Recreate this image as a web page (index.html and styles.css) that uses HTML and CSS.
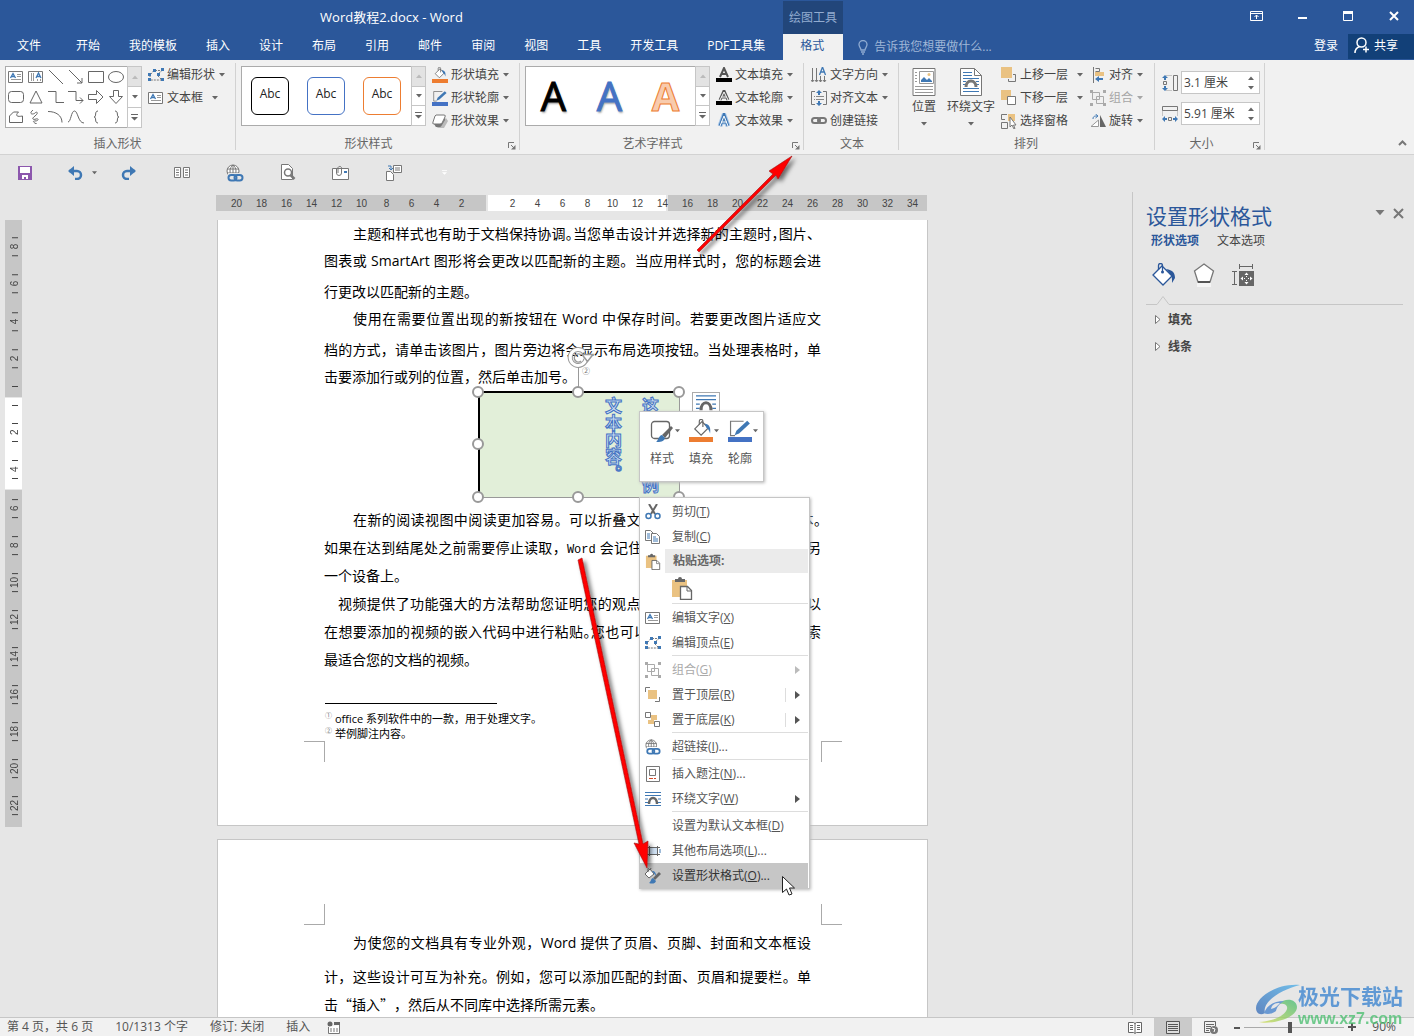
FILE: index.html
```html
<!DOCTYPE html>
<html lang="zh-CN">
<head>
<meta charset="utf-8">
<title>Word教程2.docx - Word</title>
<link rel="stylesheet" href="styles.css">
</head>
<body>
<svg class="defs" aria-hidden="true">
  <defs>
    <symbol id="caret" viewBox="0 0 6 4"><path d="M0 0h6L3 3.500z" fill="currentColor"/></symbol>
    <symbol id="launcher" viewBox="0 0 8 8"><path d="M.5 6V.5H6M3 3l3 3" fill="none" stroke="#777"/><path d="M7.500 3v4.500H3z" fill="#777"/></symbol>
    <symbol id="more" viewBox="0 0 7 7"><path d="M0 0h7v1H0zM0 3h7L3.500 6.500z" fill="currentColor"/></symbol>
    <symbol id="textbox" viewBox="0 0 16 14"><path d="M.5 1.500h14v11H.5z" fill="#fff" stroke="#777"/><path d="M9 4.500h4M9 6.500h4M3 9.500h10" stroke="#999"/><path d="M2.500 8L5 3.500 7.500 8M3.500 6.500h3" fill="none" stroke="#3f78b4" stroke-width="1.300"/></symbol>
    <symbol id="points" viewBox="0 0 16 14"><path d="M2 12V7l4-4.500h8L9 7l5 5H2" fill="none" stroke="#777" stroke-dasharray="2 1"/><path d="M0 10h3v3H0zM0 5h3v3H0zM5 1h3v3H5zM13 0h3v3h-3zM9 5h3v3H9zM13 10h3v3h-3z" fill="#3f78b4"/></symbol>
    <symbol id="group" viewBox="0 0 16 16"><path d="M2.500 2.500h7v7h-7zM6.500 6.500h7v7h-7z" fill="none" stroke="#aaa"/><path d="M0 0h3v3H0zM13 0h3v3h-3zM0 13h3v3H0zM13 13h3v3h-3z" fill="#aaa"/></symbol>
    <symbol id="bucket" viewBox="0 0 24 20"><path d="M4 11l8-8 7 7-8 8z" fill="#fff" stroke="#666" stroke-width="1.300"/><path d="M9 6V2.500a2 2 0 0 1 4 0V9" fill="none" stroke="#666" stroke-width="1.300"/><path d="M15 5c5 1 7 4 6 11-1-3-2-5-4-6z" fill="#3f78b4"/></symbol>
    <symbol id="pen" viewBox="0 0 24 20"><path d="M16 2.500H1.500v16h5" fill="none" stroke="#777" stroke-width="1.300"/><path d="M6 18l2-5L20 2l3 3L11 16z" fill="#3f78b4"/></symbol>
    <symbol id="wrap" viewBox="0 0 16 14"><path d="M0 .5h16M0 3.500h16M0 10.500h3M13 10.500h3M0 13.500h16M0 7h3M13 7h3" stroke="#3f78b4"/><path d="M4 12c0-8 8-8 8 0" fill="none" stroke="#666" stroke-width="2.500"/></symbol>
    <symbol id="weblink" viewBox="0 0 18 18"><circle cx="7" cy="7" r="6" fill="#fff" stroke="#777"/><path d="M1 5h12M1 9h12M7 1v12M7 1C3 4 3 10 7 13M7 1c4 3 4 9 0 12" fill="none" stroke="#777"/><path d="M2 9h16v9H2z" fill="#e6e6e6"/><rect x="2.500" y="11" width="8" height="5.500" rx="2.700" fill="none" stroke="#3f78b4" stroke-width="2"/><rect x="8.500" y="11" width="8" height="5.500" rx="2.700" fill="none" stroke="#3f78b4" stroke-width="2"/></symbol>
    <symbol id="weblink-menu" viewBox="0 0 18 18"><circle cx="7" cy="7" r="6" fill="#fff" stroke="#777"/><path d="M1 5h12M1 9h12M7 1v12M7 1C3 4 3 10 7 13M7 1c4 3 4 9 0 12" fill="none" stroke="#777"/><path d="M2 9h16v9H2z" fill="#fff"/><rect x="2.500" y="11" width="8" height="5.500" rx="2.700" fill="none" stroke="#3f78b4" stroke-width="2"/><rect x="8.500" y="11" width="8" height="5.500" rx="2.700" fill="none" stroke="#3f78b4" stroke-width="2"/></symbol>
    <symbol id="paste" viewBox="0 0 22 24"><path d="M1 4h15v17H1z" fill="#eac282"/><path d="M4 6V3h3a2 2 0 0 1 4 0h3v3z" fill="#666"/><path d="M9.500 10.500h7l4 4v9h-11z" fill="#fff" stroke="#666" stroke-width="1.300"/><path d="M16 11v4h4" fill="none" stroke="#666"/></symbol>
    <symbol id="arrow-right" viewBox="0 0 5 8"><path d="M0 0l5 4-5 4z" fill="currentColor"/></symbol>
  </defs>
</svg>

<header class="titlebar">
  <h1 class="doc-title">Word教程2.docx - Word</h1>
  <span class="context-title">绘图工具</span>
  <div class="window-buttons">
    <button aria-label="功能区显示选项"><svg width="13" height="10"><path d="M.5.500h12v9H.5zM.5 2.500h12M6.500 8V4M4.500 6l2-2 2 2" fill="none" stroke="#fff"/></svg></button>
    <button aria-label="最小化"><svg width="9" height="6"><path d="M0 4h9v2H0z" fill="#fff"/></svg></button>
    <button aria-label="最大化"><svg width="10" height="10"><path d="M.5.500h9v9h-9zM0 1.500h10" fill="none" stroke="#fff"/><path d="M0 0h10v3H0z" fill="#fff"/></svg></button>
    <button aria-label="关闭"><svg width="10" height="10"><path d="M1 1l8 8M9 1L1 9" stroke="#fff" stroke-width="2"/></svg></button>
  </div>
</header>

<nav class="tabs">
  <button class="tab file">文件</button><button class="tab">开始</button><button class="tab">我的模板</button><button class="tab">插入</button><button class="tab">设计</button><button class="tab">布局</button><button class="tab">引用</button><button class="tab">邮件</button><button class="tab">审阅</button><button class="tab">视图</button><button class="tab">工具</button><button class="tab">开发工具</button><button class="tab">PDF工具集</button><button class="tab active">格式</button>
  <button class="tell-me"><svg width="10" height="15"><path d="M3 10C3 8 1 7 1 4.500a4 4 0 0 1 8 0C9 7 7 8 7 10zM3 12h4M4 14h2" fill="none" stroke="#8fabd1" stroke-width="1.300"/></svg>告诉我您想要做什么...</button>
  <button class="sign-in">登录</button>
  <button class="share"><svg width="16" height="17"><circle cx="7.500" cy="5.500" r="4.500" fill="none" stroke="#fff" stroke-width="1.500"/><path d="M1 16c0-4 2-5.500 4.500-6.500M9 12.500h6M12 9.500v6" fill="none" stroke="#fff" stroke-width="1.500"/></svg>共享</button>
</nav>

<section class="ribbon" aria-label="格式">
  <div class="group g-insert">
    <div class="group-body">
      <div class="gallery shapes">
        <div class="shape-grid">
          <svg viewBox="0 0 16 14"><use href="#textbox"/></svg>
          <svg viewBox="0 0 16 14"><path d="M.5 1.500h14v11H.5z" fill="#fff" stroke="#777"/><path d="M3.500 3v8M5.500 3v8M9.500 9v2M12.500 9v2" stroke="#999"/><path d="M8 8l2.500-5L13 8M9 6.500h3" fill="none" stroke="#3f78b4" stroke-width="1.300"/></svg>
          <svg viewBox="0 0 16 14"><path d="M1 0l14 14"/></svg>
          <svg viewBox="0 0 16 14"><path d="M1 0l13 13M14 8v5H9"/></svg>
          <svg viewBox="0 0 16 14"><path d="M.5 1.500h15v11H.5z"/></svg>
          <svg viewBox="0 0 16 14"><ellipse cx="8" cy="7" rx="7.500" ry="5.500"/></svg>
          <svg viewBox="0 0 16 14"><rect x=".5" y="1.500" width="15" height="11" rx="3"/></svg>
          <svg viewBox="0 0 16 14"><path d="M8 1l6 12H2z"/></svg>
          <svg viewBox="0 0 16 14"><path d="M0 1.500h8v11h8"/></svg>
          <svg viewBox="0 0 16 14"><path d="M0 1.500h8v9h7M12 7.500l3 3-3 3"/></svg>
          <svg viewBox="0 0 16 14"><path d="M.5 4.500h8V.5L15 7l-6.500 6.500v-4h-8z"/></svg>
          <svg viewBox="0 0 16 14"><path d="M5.500.5h5v6h4L8 13.500 1.500 6.500h4z"/></svg>
          <svg viewBox="0 0 16 14"><path d="M1.500 12.500V6l4-4h5c-4 4-1 5 4 4v6.500z"/></svg>
          <svg viewBox="0 0 16 14"><path d="M5 0c-5 4 0 5 2 3s4 0 0 3-2 4 1 3 3 2-1 2 1 3 2 3"/></svg>
          <svg viewBox="0 0 16 14"><path d="M0 1.500c8 0 14 4 14 11"/></svg>
          <svg viewBox="0 0 16 14"><path d="M0 12C3 12 3 1 6.500 1S10 13 16 13"/></svg>
          <svg viewBox="0 0 16 14"><path d="M10 1C6 1 9 7 6 7c3 0 0 6 4 6"/></svg>
          <svg viewBox="0 0 16 14"><path d="M7 1c4 0 1 6 4 6-3 0 0 6-4 6"/></svg>
        </div>
        <div class="scroller"><button disabled aria-label="上一行"><svg class="flip" width="6" height="4"><use href="#caret"/></svg></button><button aria-label="下一行"><svg width="6" height="4"><use href="#caret"/></svg></button><button aria-label="其他"><svg width="7" height="7"><use href="#more"/></svg></button></div>
      </div>
      <div class="commands">
        <button><svg width="16" height="14"><use href="#points"/></svg><span>编辑形状</span><svg class="caret" width="6" height="4"><use href="#caret"/></svg></button>
        <button><svg width="16" height="14"><use href="#textbox"/></svg><span>文本框</span><svg class="caret far" width="6" height="4"><use href="#caret"/></svg></button>
      </div>
    </div>
    <div class="group-label">插入形状</div>
  </div>

  <div class="group g-style">
    <div class="group-body">
      <div class="gallery">
        <div class="style-list"><button class="swatch">Abc</button><button class="swatch blue">Abc</button><button class="swatch orange">Abc</button></div>
        <div class="scroller"><button disabled aria-label="上一行"><svg class="flip" width="6" height="4"><use href="#caret"/></svg></button><button aria-label="下一行"><svg width="6" height="4"><use href="#caret"/></svg></button><button aria-label="其他"><svg width="7" height="7"><use href="#more"/></svg></button></div>
      </div>
      <div class="commands">
        <button><svg width="16" height="16"><use href="#bucket" width="16" height="12"/><path d="M0 12h16v4H0z" fill="#ed7d31"/></svg><span>形状填充</span><svg class="caret" width="6" height="4"><use href="#caret"/></svg></button>
        <button><svg width="16" height="16"><use href="#pen" width="16" height="12"/><path d="M0 12h16v4H0z" fill="#4472c4"/></svg><span>形状轮廓</span><svg class="caret" width="6" height="4"><use href="#caret"/></svg></button>
        <button><svg width="16" height="14"><path d="M3 12l3 2h6l4-7-2-3z" fill="#bbb"/><path d="M4 1h8q2 0 1 2l-3 6q-.5 1-2 1H2Q0 10 1 8l2-6z" fill="#fff" stroke="#777"/><path d="M2 10h6q2 0 3-2l2-5v3l-3 5q-1 2-2 2H4z" fill="#777"/></svg><span>形状效果</span><svg class="caret" width="6" height="4"><use href="#caret"/></svg></button>
      </div>
    </div>
    <div class="group-label">形状样式<button class="launch" aria-label="设置形状格式"><svg width="8" height="8"><use href="#launcher"/></svg></button></div>
  </div>

  <div class="group g-style">
    <div class="group-body">
      <div class="gallery">
        <div class="style-list art"><button class="wordart">A</button><button class="wordart blue">A</button><button class="wordart orange">A</button></div>
        <div class="scroller"><button disabled aria-label="上一行"><svg class="flip" width="6" height="4"><use href="#caret"/></svg></button><button aria-label="下一行"><svg width="6" height="4"><use href="#caret"/></svg></button><button aria-label="其他"><svg width="7" height="7"><use href="#more"/></svg></button></div>
      </div>
      <div class="commands">
        <button><svg width="16" height="15"><path d="M4 10L8 1l4 9M5.500 7h5" fill="none" stroke="#555" stroke-width="2"/><path d="M0 11h16v4H0z"/></svg><span>文本填充</span><svg class="caret" width="6" height="4"><use href="#caret"/></svg></button>
        <button><svg width="16" height="15"><path d="M4 10L8 1l4 9M5.500 7h5" fill="none" stroke="#555" stroke-width="3"/><path d="M4 10L8 2l4 8M5.500 7h5" fill="none" stroke="#fff"/><path d="M0 11h16v4H0z"/></svg><span>文本轮廓</span><svg class="caret" width="6" height="4"><use href="#caret"/></svg></button>
        <button><svg width="16" height="15"><path d="M4 13L8 2l4 11M5 9h6" fill="none" stroke="#a9c8ea" stroke-width="5"/><path d="M4 13L8 2l4 11M5 9h6" fill="none" stroke="#3f78b4" stroke-width="3"/><path d="M4 13L8 3l4 10M5 9h6" fill="none" stroke="#fff"/></svg><span>文本效果</span><svg class="caret" width="6" height="4"><use href="#caret"/></svg></button>
      </div>
    </div>
    <div class="group-label">艺术字样式<button class="launch" aria-label="设置文本效果格式"><svg width="8" height="8"><use href="#launcher"/></svg></button></div>
  </div>

  <div class="group g-text">
    <div class="group-body">
      <div class="commands">
        <button><svg width="16" height="16"><path d="M1.500 1v13M5.500 1v13M9.500 9v6M13.500 9v6M0 13l1.500 2L3 13M4 13l1.500 2L7 13M8 13l1.500 2 1.500-2M12 13l1.500 2 1.500-2" fill="none" stroke="#777"/><path d="M8.500 8L11.500 0l3 8M9.500 5h4" fill="none" stroke="#3f78b4" stroke-width="1.300"/></svg><span>文字方向</span><svg class="caret" width="6" height="4"><use href="#caret"/></svg></button>
        <button><svg width="16" height="16"><path d="M4 1.500H.5v13H4M12 1.500h3.500v13H12" fill="none" stroke="#777"/><path d="M3 6.500h10M3 9.500h10" stroke="#888" stroke-dasharray="1 1 8"/><path d="M8 0l3 3H9v2H7V3H5zM8 16l3-3H9v-2H7v2H5z" fill="#3f78b4"/></svg><span>对齐文本</span><svg class="caret" width="6" height="4"><use href="#caret"/></svg></button>
        <button><svg width="16" height="10"><rect x="1" y="2" width="8" height="5" rx="2.500" fill="none" stroke="#777" stroke-width="2"/><rect x="7" y="2" width="8" height="5" rx="2.500" fill="none" stroke="#777" stroke-width="2"/></svg><span>创建链接</span></button>
      </div>
    </div>
    <div class="group-label">文本</div>
  </div>

  <div class="group g-arrange">
    <div class="group-body">
      <button class="big"><svg width="24" height="28"><path d="M1 .5h22v27H1z" fill="#fff" stroke="#777"/><path d="M3 4.500h2M3 7.500h2M3 10.500h2M3 13.500h2M3 18.500h18M3 21.500h18M3 24.500h18" stroke="#999"/><path d="M7.500 3.500h14v12h-14z" fill="#fff" stroke="#999"/><path d="M9 14v-2l3-3 3 3 2-2 3 3v1z" fill="#3f78b4"/><circle cx="17" cy="6.500" r="1.500" fill="#eac282"/></svg><span>位置</span><svg class="caret" width="6" height="4"><use href="#caret"/></svg></button>
      <button class="big"><svg width="22" height="28"><path d="M.5.500h14l7 7v20H.5z" fill="#fff" stroke="#777"/><path d="M14.500.5v7h7" fill="none" stroke="#777"/><path d="M3 4.500h9M3 7.500h9M3 10.500h16M3 13.500h3M16 13.500h3M3 16.500h2M17 16.500h2M3 20.500h16M3 23.500h16" stroke="#3f78b4"/><path d="M6 19c0-8 10-8 10 0" fill="none" stroke="#777" stroke-width="3"/></svg><span>环绕文字</span><svg class="caret" width="6" height="4"><use href="#caret"/></svg></button>
      <div class="commands layers">
        <button><svg width="16" height="16"><path d="M0 0h11v11H0z" fill="#eac282"/><path d="M12 7.500h2.500v7h-7V12" fill="none" stroke="#777"/></svg><span>上移一层</span><svg class="caret far" width="6" height="4"><use href="#caret"/></svg></button>
        <button><svg width="16" height="16"><path d="M0 0h10v10H0z" fill="#eac282"/><path d="M6.500 6.500h8v8h-8z" fill="#fff" stroke="#777"/></svg><span>下移一层</span><svg class="caret far" width="6" height="4"><use href="#caret"/></svg></button>
        <button><svg width="16" height="16"><path d="M7 1h7v7H7z" fill="#eac282"/><path d="M6 1.500H.5v5H4M.5 9.500h6v6h-6z" fill="none" stroke="#777"/><path d="M9 4v10l2-2 2 4 1-.5-1.500-3.500H15z" fill="#fff" stroke="#777"/></svg><span>选择窗格</span></button>
      </div>
      <div class="commands">
        <button><svg width="16" height="16"><path d="M3.500 0v16M5.500 1.500h4v3h-4" fill="none" stroke="#777"/><path d="M5 5h9v4H5z" fill="#eac282"/><path d="M5 12l4-3v2h4v2H9v2z" fill="#3f78b4"/></svg><span>对齐</span><svg class="caret" width="6" height="4"><use href="#caret"/></svg></button>
        <button disabled><svg width="16" height="16"><use href="#group"/></svg><span>组合</span><svg class="caret" width="6" height="4"><use href="#caret"/></svg></button>
        <button><svg width="16" height="14"><path d="M1 12.500h7.500V6z" fill="#fff" stroke="#999"/><path d="M10 1l6 12h-6z" fill="#666"/><path d="M3 5c0-3 2-3 4-3M5.500 0l2.500 2-2.500 2" fill="none" stroke="#3f78b4"/></svg><span>旋转</span><svg class="caret" width="6" height="4"><use href="#caret"/></svg></button>
      </div>
    </div>
    <div class="group-label">排列</div>
  </div>

  <div class="group g-size">
    <div class="group-body size-body">
      <div class="size-row">
        <label for="h"><svg width="16" height="16"><path d="M4.500.5h6M4.500 15.500h6" stroke="#999" stroke-dasharray="1 1"/><path d="M11.500.500h4v15h-4zM1.500 6.500h3v3h-3z" fill="none" stroke="#777"/><path d="M3 0l3 3H4v2H2V3H0zM3 16l3-3H4v-2H2v2H0z" fill="#3f78b4"/></svg></label>
        <div class="spin"><input id="h" aria-label="高度" value="3.1 厘米"><span><svg class="flip" width="6" height="4"><use href="#caret"/></svg><svg width="6" height="4"><use href="#caret"/></svg></span></div>
      </div>
      <div class="size-row">
        <label for="w"><svg width="16" height="16"><path d="M.5 4.500v6M15.500 4.500v6" stroke="#999" stroke-dasharray="1 1"/><path d="M.5.500h15v4H.5zM6.500 11.500h3v3h-3z" fill="none" stroke="#777"/><path d="M0 13l3-3v2h2v2H3v2zM16 13l-3-3v2h-2v2h2v2z" fill="#3f78b4"/></svg></label>
        <div class="spin"><input id="w" aria-label="宽度" value="5.91 厘米"><span><svg class="flip" width="6" height="4"><use href="#caret"/></svg><svg width="6" height="4"><use href="#caret"/></svg></span></div>
      </div>
    </div>
    <div class="group-label">大小<button class="launch" aria-label="布局"><svg width="8" height="8"><use href="#launcher"/></svg></button></div>
  </div>
  <button class="collapse" aria-label="折叠功能区"><svg width="9" height="6"><path d="M1 5l3.500-3.500L8 5" fill="none" stroke="#777" stroke-width="2"/></svg></button>
</section>

<div class="quick">
  <button aria-label="保存"><svg width="14" height="14"><path d="M0 0h14v14H0z" fill="#8c57ad"/><path d="M2 1h10v6H2zM4 9h6v4H8v-2H6v2H4z" fill="#fff"/></svg></button>
  <button aria-label="撤消"><svg width="15" height="14"><path d="M1 5h8a4 4 0 0 1 0 8H7" fill="none" stroke="#3f78b4" stroke-width="2.500"/><path d="M0 5l6-5v10z" fill="#3f78b4"/></svg></button>
  <button class="undo-list" aria-label="撤消列表"><svg width="5" height="4"><use href="#caret"/></svg></button>
  <button aria-label="重复"><svg width="15" height="14"><path d="M14 5H6a4 4 0 0 0 0 8h2" fill="none" stroke="#3f78b4" stroke-width="2.500"/><path d="M15 5L9 0v10z" fill="#3f78b4"/></svg></button>
  <button aria-label="并排"><svg width="16" height="12"><path d="M.5.500h6v10h-6zM9.500.500h6v10h-6z" fill="#fff" stroke="#777"/><path d="M2 3h3M2 5.500h3M2 8h3M11 3h3M11 5.500h3M11 8h3" stroke="#777"/></svg></button>
  <button aria-label="超链接"><svg width="18" height="18"><use href="#weblink"/></svg></button>
  <button aria-label="打印预览"><svg width="16" height="17"><path d="M1.500.500h7l4 4v11h-11z" fill="#fff" stroke="#777"/><circle cx="8" cy="8.500" r="3.500" fill="#fff" stroke="#777" stroke-width="1.500"/><path d="M10.500 11l4 4" stroke="#777" stroke-width="2.500"/></svg></button>
  <button aria-label="电子邮件"><svg width="17" height="16"><path d="M.5 3.500h16v11H.5z" fill="#fff" stroke="#777"/><path d="M12 6h3v2h-3z" fill="#3f78b4"/><path d="M4.500 3v5a2.500 2.500 0 0 0 5 0V2.500a2 2 0 0 0-3.500 0v5.500" fill="none" stroke="#777"/></svg></button>
  <button aria-label="插入文档"><svg width="17" height="17"><path d="M1.500 7.500h4l3 3v6h-7z" fill="#fff" stroke="#777"/><path d="M8.500 1.500h8v7h-8z" fill="#fff" stroke="#777"/><path d="M10 4h5M10 6h5" stroke="#777"/><path d="M3 2h3v3M4 4l2 2 2-2" fill="none" stroke="#3f78b4"/></svg></button>
  <button class="faint" aria-label="自定义"><svg width="5" height="5"><use href="#more"/></svg></button>
</div>

<main class="workspace">
  <div class="v-ruler" aria-hidden="true">
    <div class="seg before"><b>8</b><b>6</b><b>4</b><b>2</b></div>
    <div class="seg live"><b>2</b><b>4</b></div>
    <div class="seg after"><b>6</b><b>8</b><b>10</b><b>12</b><b>14</b><b>16</b><b>18</b><b>20</b><b>22</b></div>
  </div>
  <div class="canvas">
    <div class="h-ruler" aria-hidden="true">
      <div class="seg before"><b>20</b><b>18</b><b>16</b><b>14</b><b>12</b><b>10</b><b>8</b><b>6</b><b>4</b><b>2</b></div>
      <div class="seg live"><b>2</b><b>4</b><b>6</b><b>8</b><b>10</b><b>12</b><b>14</b></div>
      <div class="seg after"><b>16</b><b>18</b><b>20</b><b>22</b><b>24</b><b>26</b><b>28</b><b>30</b><b>32</b><b>34</b></div>
    </div>

    <article class="page first">
      <div class="text lead">
        <p><span class="line indent full">主题和样式也有助于文档保持协调<i>。</i>当您单击设计并选择新的主题时<i>，</i>图片、</span>
        <span class="line full">图表或 SmartArt 图形将会更改以匹配新的主题。当应用样式时，您的标题会进</span>
        <span class="line tall">行更改以匹配新的主题。</span></p>
        <p><span class="line indent full">使用在需要位置出现的新按钮在 Word 中保存时间。若要更改图片适应文</span>
        <span class="line tall full">档的方式，请单击该图片，图片旁边将会显示布局选项按钮。当处理表格时，单</span>
        <span class="line">击要添加行或列的位置，然后单击加号。<sup>②</sup></span></p>
      </div>
      <figure class="shape">
        <p class="shape-text"><span>这是示范例</span><span class="short">文本内容。</span></p>
        <svg class="handles" width="222" height="156">
          <path d="M111.500 28v20" stroke="#999"/>
          <path d="M119 20a8 8 0 1 1-2-7" fill="none" stroke="#999" stroke-width="5"/>
          <path d="M119 20a8 8 0 1 1-2-7" fill="none" stroke="#fff" stroke-width="3"/>
          <path d="M115 15.500h11l-5.500 7z" fill="#fff" stroke="#999" stroke-width="1.500"/>
          <path d="M114 16a4 4 0 1 0 0 6" fill="none" stroke="#999" stroke-width="1.500"/>
          <g fill="#fff" stroke="#999" stroke-width="2"><circle cx="11" cy="53" r="5"/><circle cx="111" cy="53" r="5"/><circle cx="212" cy="53" r="5"/><circle cx="11" cy="105" r="5"/></g>
        </svg>
        <span class="knob low-left"></span><span class="knob low-mid"></span><span class="knob low-right"></span>
      </figure>
      <div class="text body">
        <p><span class="line indent full">在新的阅读视图中阅读更加容易。可以折叠文档某些部分并关注所需文本<i>。</i></span>
        <span class="line full">如果在达到结尾处之前需要停止读取，<code>Word</code> 会记住您的停止位置 —— 即使在另</span>
        <span class="line">一个设备上。</span></p>
        <p><span class="line half full">视频提供了功能强大的方法帮助您证明您的观点。当您单击联机视频时<i>，</i>可以</span>
        <span class="line full">在想要添加的视频的嵌入代码中进行粘贴<i>。</i>您也可以键入一个关键字以联机搜索</span>
        <span class="line">最适合您的文档的视频。</span></p>
      </div>
      <div class="footnotes">
        <p><sup>①</sup>office 系列软件中的一款，用于处理文字。</p>
        <p><sup>②</sup>举例脚注内容。</p>
      </div>
      <div class="crops bottom"><span></span><span></span></div>

      <button class="layout-options" aria-label="布局选项"><svg width="20" height="18"><use href="#wrap"/></svg></button>

      <div class="mini-toolbar">
        <button><span class="mini-icon"><svg width="24" height="24"><rect x="1.500" y="2.500" width="18" height="17" rx="3" fill="#fff" stroke="#666" stroke-width="1.300"/><path d="M21 7l2 2-8 10-3-3z" fill="#666"/><path d="M12 16l3 3c-1 4-5 4-9 4 2-1 3-7 6-7z" fill="#3f78b4"/></svg><svg class="caret" width="5" height="4"><use href="#caret"/></svg></span><span>样式</span></button>
        <button><span class="mini-icon"><svg width="24" height="24"><use href="#bucket" x="1" width="24" height="18"/><path d="M0 18h24v5H0z" fill="#ed7d31"/></svg><svg class="caret" width="5" height="4"><use href="#caret"/></svg></span><span>填充</span></button>
        <button><span class="mini-icon"><svg width="24" height="24"><use href="#pen" width="24" height="18"/><path d="M0 18h24v5H0z" fill="#4472c4"/></svg><svg class="caret" width="5" height="4"><use href="#caret"/></svg></span><span>轮廓</span></button>
      </div>

      <div class="menu" role="menu">
        <button role="menuitem"><svg viewBox="0 0 16 16"><path d="M4 0l6 10M12 0L6 10" stroke="#666" stroke-width="2"/><circle cx="3.500" cy="12" r="2.500" fill="none" stroke="#3f78b4" stroke-width="1.500"/><circle cx="12.500" cy="12" r="2.500" fill="none" stroke="#3f78b4" stroke-width="1.500"/></svg><span>剪切(<u>T</u>)</span></button>
        <button role="menuitem"><svg viewBox="0 0 16 16"><path d="M.5 1.500h5l3 3v7h-8z" fill="#fff" stroke="#777"/><path d="M6.500 4.500h5l3 3v7h-8z" fill="#fff" stroke="#777"/><path d="M2 5h3M2 7h3M2 9h3M8 8h3M8 10h5M8 12h5" stroke="#3f78b4"/></svg><span>复制(<u>C</u>)</span></button>
        <div class="menu-title"><svg viewBox="0 0 22 24"><use href="#paste"/></svg><strong>粘贴选项:</strong></div>
        <div class="paste-row"><button aria-label="粘贴"><svg width="22" height="24"><use href="#paste"/></svg></button></div>
        <hr>
        <button role="menuitem"><svg viewBox="0 0 16 14"><use href="#textbox"/></svg><span>编辑文字(<u>X</u>)</span></button>
        <button role="menuitem"><svg viewBox="0 0 16 14"><use href="#points"/></svg><span>编辑顶点(<u>E</u>)</span></button>
        <hr>
        <button role="menuitem" disabled><svg viewBox="0 0 16 16"><use href="#group"/></svg><span>组合(<u>G</u>)</span><svg class="sub" viewBox="0 0 5 8"><use href="#arrow-right"/></svg></button>
        <button role="menuitem"><svg viewBox="0 0 16 16"><path d="M3 3h9v9H3z" fill="#eac282"/><path d="M5 .5H.5V5M10 14.500h4.500V10" fill="none" stroke="#777"/></svg><span>置于顶层(<u>R</u>)</span><svg class="sub split" viewBox="0 0 5 8"><use href="#arrow-right"/></svg></button>
        <button role="menuitem"><svg viewBox="0 0 16 16"><path d="M6 3h6v5H9v4H3V8h3z" fill="#eac282"/><path d="M.5.500h5v5h-5zM9.500 9.500h5v5h-5z" fill="#fff" stroke="#777"/></svg><span>置于底层(<u>K</u>)</span><svg class="sub split" viewBox="0 0 5 8"><use href="#arrow-right"/></svg></button>
        <hr>
        <button role="menuitem"><svg viewBox="0 0 18 18"><use href="#weblink-menu"/></svg><span>超链接(<u>I</u>)...</span></button>
        <hr>
        <button role="menuitem"><svg viewBox="0 0 16 16"><path d="M1.500.500h13v15h-13z" fill="#fff" stroke="#777"/><path d="M4.500 3.500h6v6h-6z" fill="none" stroke="#777"/><path d="M4 12.500h4M9 12.500h2" stroke="#d24726"/></svg><span>插入题注(<u>N</u>)...</span></button>
        <button role="menuitem"><svg viewBox="0 0 16 14"><use href="#wrap"/></svg><span>环绕文字(<u>W</u>)</span><svg class="sub" viewBox="0 0 5 8"><use href="#arrow-right"/></svg></button>
        <hr>
        <button role="menuitem"><svg viewBox="0 0 16 16"></svg><span>设置为默认文本框(<u>D</u>)</span></button>
        <button role="menuitem"><svg viewBox="0 0 16 16"><path d="M4.500 3v10M12.500 3v10M2 4.500h13M2 11.500h13" stroke="#666"/><path d="M5 5h7v6H5z" fill="#cfe0f2"/><path d="M1 3v2M1 7v2M1 11v2M15 6v4" stroke="#3f78b4"/></svg><span>其他布局选项(<u>L</u>)...</span></button>
        <button role="menuitem" class="current"><svg viewBox="0 0 16 16"><path d="M0 6l5-5 4 5-5 4z" fill="#fff" stroke="#666"/><path d="M3 4V1a1.500 1.500 0 0 1 3 0" fill="none" stroke="#666"/><path d="M14 4l2 2-6 6-2-2z" fill="#666"/><path d="M8 10l3 3c-1 3-4 3-7 2 2-1 2-5 4-5zM7 3c3 0 4 2 4 5z" fill="#3f78b4"/></svg><span>设置形状格式(<u>O</u>)...</span></button>
      </div>
    </article>

    <article class="page second">
      <div class="crops top"><span></span><span></span></div>
      <div class="text next">
        <p><span class="line indent full">为使您的文档具有专业外观，Word 提供了页眉、页脚、封面和文本框设</span>
        <span class="line tall full">计，这些设计可互为补充。例如，您可以添加匹配的封面、页眉和提要栏。单</span>
        <span class="line">击<q>“</q>插入<q>”</q>，然后从不同库中选择所需元素。</span></p>
      </div>
    </article>
  </div>

  <aside class="pane">
    <div class="pane-head">
      <h2>设置形状格式</h2>
      <button aria-label="任务窗格选项"><svg width="10" height="6"><use href="#caret"/></svg></button>
      <button aria-label="关闭窗格"><svg width="11" height="11"><path d="M1 1l9 9M10 1l-9 9" stroke="#777" stroke-width="2"/></svg></button>
    </div>
    <div class="pane-tabs"><button class="on">形状选项</button><button>文本选项</button></div>
    <div class="pane-icons">
      <button aria-label="填充与线条"><svg width="24" height="24"><path d="M1 12L10 3l10 10-9 9z" fill="#fff" stroke="#2b579a" stroke-width="1.300"/><path d="M6.500 7V2.500a2 2 0 0 1 4 0V9" fill="none" stroke="#2b579a" stroke-width="1.300"/><circle cx="10.500" cy="9" r="1.500" fill="#2b579a"/><path d="M14 6c7 1 9 4 9 9l-3 5c0-4 0-6-1-8z" fill="#2b579a"/></svg></button>
      <button aria-label="效果"><svg width="22" height="24"><path d="M4 20h14v4H4z" fill="#fff" opacity=".6"/><path d="M11 1l9.500 7-3.500 11H5L1.500 8z" fill="#fff" stroke="#777" stroke-width="1.300"/><path d="M5 19h12" stroke="#555" stroke-width="2"/></svg></button>
      <button aria-label="布局属性"><svg width="22" height="22"><path d="M7 2.500h14M7.500 0v5M20.500 0v5M2.500 7v14M0 7.500h5M0 20.500h5" stroke="#666"/><rect x="7" y="7" width="15" height="15" fill="#666"/><path d="M14.500 8.500l2 2.500h-4zM14.500 20.500l2-2.500h-4zM8.500 14.500l2.500-2v4zM20.500 14.500l-2.500-2v4zM12 14h1v1h-1zM16 14h1v1h-1zM14 12h1v1h-1zM14 16h1v1h-1z" fill="#fff"/></svg></button>
    </div>
    <svg class="pane-rule" width="257" height="10"><path d="M0 9.500h11l6-8 6 8h234" fill="none" stroke="#c6c6c6"/></svg>
    <button class="section"><svg width="6" height="9"><path d="M.5.500l4.500 4-4.500 4z" fill="#fff" stroke="#777"/></svg>填充</button>
    <button class="section"><svg width="6" height="9"><path d="M.5.500l4.500 4-4.500 4z" fill="#fff" stroke="#777"/></svg>线条</button>
  </aside>
</main>

<footer class="status">
  <span>第 4 页，共 6 页</span><span>10/1313 个字</span><span>修订: 关闭</span><span>插入</span>
  <svg class="macro" width="13" height="13"><circle cx="3" cy="3" r="2.500" fill="#666"/><path d="M7 1h6v3H7z" fill="#666"/><path d="M1.500 6v6.500h11V4" fill="#fff" stroke="#777"/><path d="M3 8h8M3 10h8" stroke="#777" stroke-dasharray="2 1"/></svg>
  <div class="views">
    <button aria-label="阅读视图"><svg width="14" height="13"><path d="M.5 1.500h5l1.500 1 1.500-1h5v10h-5L7 12.500l-1.500-1h-5zM7 2v10" fill="#fff" stroke="#666"/><path d="M2 4.500h3M2 6.500h3M2 8.500h3M9 4.500h3M9 6.500h3M9 8.500h3" stroke="#666"/></svg></button>
    <button class="on" aria-label="页面视图"><svg width="14" height="13"><path d="M.5.500h13v12H.5z" fill="#ddd" stroke="#555"/><path d="M2 3.500h10M2 5.500h10M2 7.500h10M2 9.500h10" stroke="#555"/></svg></button>
    <button aria-label="Web 版式"><svg width="14" height="13"><path d="M6 11.500H.5V.5h11V5M2 3.500h8M2 5.500h5M2 7.500h4M2 9.500h3" fill="none" stroke="#666"/><circle cx="10" cy="9" r="4" fill="#777"/><path d="M8 7l3 1-1 3" stroke="#fff" fill="none"/></svg></button>
  </div>
  <div class="zoom-group">
    <button aria-label="缩小"><svg width="6" height="2"><path d="M0 0h6v2H0z" fill="#555"/></svg></button>
    <input class="zoom" type="range" min="0" max="100" value="45" aria-label="显示比例">
    <button aria-label="放大"><svg width="8" height="8"><path d="M3 0h2v8H3zM0 3h8v2H0z" fill="#555"/></svg></button>
  </div>
  <span class="percent">90%</span>
</footer>

<svg class="annotations" viewBox="0 0 1414 1036" width="1414" height="1036" aria-hidden="true">
  <defs><filter id="drop" x="-30%" y="-30%" width="160%" height="160%"><feDropShadow dx="3" dy="3" stdDeviation="2" flood-opacity=".55"/></filter></defs>
  <g filter="url(#drop)" fill="#fe0000" stroke="#a01010" stroke-width=".6">
    <path d="M697 250l76-76-4-3 23-15-14 23-2-4-77 77z"/>
    <path d="M578 560l4-2 61 286 5-3-1 27-13-25 5 1z"/>
  </g>
  <path d="M782.500 876.500v16l4-3.500 2.500 6 3-1-2.500-6h5z" fill="#fff" stroke="#222"/>
</svg>

<div class="watermark">
  <svg width="44" height="42" viewBox="0 0 44 42"><defs><linearGradient id="wb" x1="0" y1="1" x2="1" y2="0"><stop offset="0" stop-color="#3e6fb8"/><stop offset="1" stop-color="#55b4ea"/></linearGradient><linearGradient id="wg" x1="0" y1="1" x2="1" y2="0"><stop offset="0" stop-color="#d5dd5a"/><stop offset="1" stop-color="#49bd7b"/></linearGradient></defs><path d="M44 1C20-1 0 14 0 24c0 5 4 8 9 5C6 18 24 6 44 1z" fill="url(#wb)"/><path d="M3 38c10 3 38-3 38-15 0-8-12-10-18-3 5-1 9 1 8 5-2 7-14 12-28 13z" fill="url(#wg)"/><path d="M8 29c3-8 10-12 20-12-5 3-7 6-8 10-4 3-9 4-12 2z" fill="#4b86cf"/><path d="M15 25c1-5 4-6 9-6-2 2-4 5-9 6z" fill="#e6e6e6"/></svg>
  <div><strong>极光下载站</strong><em>www.xz7.com</em></div>
</div>
</body>
</html>
```
FILE: styles.css
```css
* { box-sizing: border-box; }

body {
  margin: 0;
  height: 100vh;
  display: flex;
  flex-direction: column;
  overflow: hidden;
  position: relative;
  background: #e6e6e6;
  color: #444;
  font: 12px/16px "Open Sans", "Noto Sans CJK SC", sans-serif;
}

button {
  border: 0;
  padding: 0;
  margin: 0;
  background: none;
  color: inherit;
  font: inherit;
  white-space: nowrap;
}

p, h1, h2, figure { margin: 0; }
svg { flex: none; }
.defs { position: absolute; width: 0; height: 0; }
.flip { transform: rotate(180deg); }
.caret { color: #666; }

/* title bar */
.titlebar {
  flex: none;
  height: 34px;
  display: flex;
  background: #2b579a;
  color: #fff;
}
.doc-title {
  width: 783px;
  text-align: center;
  font-size: 13px;
  font-weight: 400;
  line-height: 34px;
}
.context-title {
  width: 60px;
  margin-top: 1px;
  text-align: center;
  line-height: 33px;
  background: #22467a;
  color: #93acd0;
}
.window-buttons {
  margin-left: auto;
  margin-right: -3px;
  padding-bottom: 2px;
  display: flex;
}
.window-buttons button {
  width: 46px;
  display: grid;
  place-items: center;
}

/* ribbon tabs */
.tabs {
  flex: none;
  height: 26px;
  display: flex;
  align-items: stretch;
  gap: 1px;
  background: #2b579a;
  color: #fff;
}
.tab { padding: 0 14px 3px; }
.tab.file { padding: 0 20px 3px 17px; }
.tab.active {
  width: 60px;
  margin-left: 3px;
  padding: 0 16px 3px 14px;
  background: #f1f1f1;
  color: #2b579a;
}
.tell-me {
  display: flex;
  align-items: center;
  gap: 6px;
  margin-left: 14px;
  color: #9fb6d7;
}
.sign-in {
  margin-left: auto;
  padding: 0 9px 3px;
}
.share {
  width: 66px;
  margin-bottom: 1px;
  padding: 0 5px 2px 6px;
  display: flex;
  align-items: center;
  gap: 4px;
  background: #124078;
}

/* ribbon */
.ribbon {
  flex: none;
  height: 95px;
  display: flex;
  padding-top: 3px;
  border-bottom: 1px solid #d2d2d2;
  background: #f1f1f1;
}
.group {
  display: flex;
  flex-direction: column;
  height: 87px;
  padding-left: 5px;
  border-right: 1px solid #d2d2d2;
}
.g-insert { width: 236px; }
.g-style { width: 284px; }
.g-text { width: 95px; padding-left: 7px; }
.g-arrange { width: 256px; padding-left: 8px; }
.g-size { width: 110px; padding-left: 7px; }
.group-body { flex: none; display: flex; height: 69px; }
.group-label {
  position: relative;
  margin-left: -5px;
  padding-top: 4px;
  text-align: center;
  color: #666;
}
.launch {
  position: absolute;
  right: 3px;
  bottom: 2px;
  line-height: 0;
}
.g-style .group-label { padding-right: 18px; }
.g-arrange .group-label { padding-right: 4px; }
.g-size .group-label { padding-right: 18px; }

.commands { display: flex; flex-direction: column; }
.commands button {
  height: 23px;
  display: flex;
  align-items: center;
  gap: 3px;
}
.commands .caret { margin-left: 1px; }
.commands .caret.far { margin-left: 6px; }
.commands.layers { width: 89px; }
.commands button:disabled, .commands button:disabled .caret { color: #a6a6a6; }
.g-insert .commands, .g-style .commands { margin-left: 6px; }

.gallery {
  display: flex;
  height: 60px;
  margin-top: 3px;
  border: 1px solid #ababab;
  background: #fff;
}
.gallery.shapes { height: 62px; }
.scroller {
  width: 15px;
  margin: -1px;
  margin-left: 0;
  display: flex;
  flex-direction: column;
}
.scroller button {
  flex: 1;
  display: grid;
  place-items: center;
  border: 1px solid #c6c6c6;
  margin-bottom: -1px;
  color: #666;
}
.scroller button:last-child { margin-bottom: 0; }
.scroller button:disabled { background: #e3e3e3; color: #bbb; }
.shape-grid {
  width: 121px;
  display: grid;
  grid-template-columns: repeat(6, 20px);
  grid-auto-rows: 20px;
}
.shape-grid svg {
  width: 16px;
  height: 14px;
  margin: 3px 2px;
  fill: none;
  stroke: #666;
}
.shape-grid svg:first-child { stroke: none; }
.style-list {
  width: 169px;
  display: flex;
  align-items: center;
  gap: 18px;
  padding-left: 9px;
}
.swatch {
  width: 38px;
  height: 38px;
  padding-bottom: 4px;
  border: 1px solid #000;
  border-radius: 6px;
  background: #fff;
  color: #222;
  font-size: 12px;
}
.swatch.blue { border-color: #4472c4; }
.swatch.orange { border-color: #ed7d31; }
.style-list.art { gap: 17px; padding-left: 8px; }
.wordart {
  width: 39px;
  font-size: 40px;
  line-height: 56px;
  color: #000;
  -webkit-text-stroke: 1px #000;
  text-shadow: 1px 2px 2px #aaa;
}
.wordart.blue { color: #4472c4; -webkit-text-stroke-color: #4472c4; }
.wordart.orange {
  color: #f8cbad;
  -webkit-text-stroke: 1px #ed7d31;
  font-weight: 700;
  text-shadow: none;
}

.big {
  width: 34px;
  height: 68px;
  padding-top: 5px;
  display: flex;
  flex-direction: column;
  align-items: center;
  gap: 3px;
}
.big + .big { width: 60px; }
.big .caret { margin-top: 4px; }

.size-body {
  flex-direction: column;
  gap: 8px;
  padding-top: 8px;
}
.size-row { display: flex; align-items: center; gap: 3px; }
.size-row label { line-height: 0; }
.spin {
  width: 79px;
  height: 23px;
  display: flex;
  border: 1px solid #c6c6c6;
  background: #fff;
}
.spin input {
  width: 62px;
  padding: 0 2px;
  border: 0;
  background: none;
  color: #444;
  font: inherit;
}
.spin span {
  display: flex;
  flex-direction: column;
  justify-content: center;
  gap: 6px;
  padding-left: 4px;
  color: #666;
}
.collapse {
  margin-left: auto;
  padding: 0 7px 4px;
  align-self: flex-end;
}

/* quick access toolbar */
.quick {
  flex: none;
  height: 35px;
  display: flex;
  align-items: center;
}
.quick button {
  width: 53px;
  height: 34px;
  display: grid;
  place-items: center;
}
.quick button:first-child { width: 50px; }
.quick button:nth-child(2) { width: 50px; }
.quick .undo-list { width: 8px; margin-left: -10px; margin-right: 4px; color: #666; }
.quick .faint { width: 48px; color: #fff; }

/* workspace */
.workspace {
  flex: 1;
  min-height: 0;
  display: flex;
  overflow: hidden;
}
.seg { background: #c6c6c6; }
.seg.live { background: #fff; }
.seg b { font: 10px/16px "Liberation Sans", Arial, sans-serif; color: #444; }

.v-ruler {
  flex: none;
  width: 17px;
  height: 607px;
  margin: 30px 0 0 5px;
  display: flex;
  flex-direction: column;
  gap: 1px;
}
.v-ruler .seg { display: flex; flex-direction: column; }
.v-ruler .before { height: 177px; padding: 8px 0 20px; }
.v-ruler .live { height: 91px; padding: 16px 0 1px; }
.v-ruler .after { flex: 1; padding-bottom: 3px; }
.v-ruler .before::after, .v-ruler .live::before {
  content: "";
  width: 6px;
  height: 1px;
  margin-left: 7px;
  background: #444;
}
.v-ruler .before::after { margin-top: 9px; margin-bottom: -10px; }
.v-ruler .live::before { margin-top: -9px; margin-bottom: 8px; }
.v-ruler b {
  flex: 1;
  width: 17px;
  display: flex;
  align-items: center;
  justify-content: space-between;
  padding: 9px 3px 9px 0;
  writing-mode: vertical-rl;
  transform: rotate(180deg);
}
.v-ruler b::before, .v-ruler b::after {
  content: "";
  width: 6px;
  height: 1px;
  background: #444;
}

.canvas {
  flex: 1;
  display: flex;
  flex-direction: column;
  align-items: center;
  padding: 5px 9px 0 0;
}
.h-ruler {
  flex: none;
  width: 711px;
  height: 16px;
  margin: 0 2px 9px 0;
  display: flex;
  gap: 2px;
}
.h-ruler .seg { display: flex; }
.h-ruler .before { width: 270px; padding-left: 8px; }
.h-ruler .live { width: 178px; padding-left: 12px; position: relative; z-index: 1; }
.h-ruler .after { flex: 1; padding-left: 7px; }
.h-ruler b { flex: none; width: 25px; text-align: center; line-height: 18px; }

.page {
  position: relative;
  flex: none;
  width: 711px;
  border: 1px solid #c6c6c6;
  background: #fff;
  color: #000;
}
.page.first { border-top: 0; padding-bottom: 63px; margin-bottom: 13px; z-index: 1; }
.page.second { padding-top: 64px; height: 400px; }
.text {
  width: 497px;
  margin-left: 106px;
  font-size: 14px;
  text-spacing-trim: space-all;
}
.text.next { width: 487px; padding-top: 4px; }
.line { display: block; line-height: 28px; }
.lead .line { line-height: 27px; }
.line.full { text-align-last: justify; }
.line.indent { padding-left: 29px; }
.line.half { padding-left: 14px; }
.line.tall { padding-top: 4px; }
.next .line.tall { padding-top: 6px; }
.line i { font-style: normal; font-feature-settings: "halt"; }
.line q { quotes: none; font-family: "Noto Sans CJK SC", sans-serif; line-height: 20px; }
.line code { font: 12px/14px "Liberation Mono", monospace; }
.line sup { margin-left: 6px; font-size: 8px; line-height: 8px; vertical-align: 8px; color: #777; }

.shape {
  position: relative;
  display: flex;
  justify-content: flex-end;
  width: 202px;
  height: 107px;
  margin: 1px 0 8px 260px;
  padding: 4px 10px 0 0;
  border: 1px solid #999;
  border-top: 2px solid #000;
  border-left: 2px solid #000;
  background: #e2efd9;
}
.shape-text {
  height: 96px;
  writing-mode: vertical-rl;
  font: 700 17px/37px "Noto Sans CJK SC", sans-serif;
  color: #cfe0f2;
  -webkit-text-stroke: 1px #4472c4;
}
.shape-text span { display: block; height: 96px; text-align-last: justify; }
.shape-text .short { text-align-last: start; }
.handles {
  position: absolute;
  left: -13px;
  top: -54px;
}
.knob {
  position: absolute;
  width: 12px;
  height: 12px;
  border: 2px solid #999;
  border-radius: 50%;
  background: #fff;
}
.low-left { left: -8px; top: 98px; }
.low-mid { left: 92px; top: 98px; }
.low-right { left: 193px; top: 98px; }

.footnotes {
  margin-left: 107px;
  font-size: 11px;
  line-height: 15px;
  padding-top: 7px;
  margin-top: 29px;
  border-top: 1px solid #000;
  width: 300px;
  border-image: linear-gradient(90deg, #000 172px, transparent 172px) 1;
}
.footnotes sup {
  display: inline-block;
  width: 10px;
  font-size: 7px;
  line-height: 8px;
  color: #777;
}
.crops {
  width: 538px;
  margin-left: 86px;
  display: flex;
  justify-content: space-between;
}
.crops span { width: 21px; height: 21px; border: 0 solid #aaa; }
.crops span:first-child { border-right-width: 1px; }
.crops span:last-child { border-left-width: 1px; }
.crops.bottom span { border-top-width: 1px; }
.crops.top span { border-bottom-width: 1px; }

.layout-options {
  position: absolute;
  left: 474px;
  top: 172px;
  width: 28px;
  height: 28px;
  border: 1px solid #ababab;
  background: #fff;
}
.mini-toolbar {
  position: absolute;
  left: 421px;
  top: 191px;
  width: 125px;
  height: 71px;
  display: flex;
  padding: 6px 0 0 10px;
  border: 1px solid #c6c6c6;
  background: #fff;
  color: #555;
  box-shadow: 1px 1px 3px #bbb;
}
.mini-toolbar button {
  flex: none;
  width: 39px;
  display: flex;
  flex-direction: column;
  align-items: flex-start;
}
.mini-icon {
  display: flex;
  align-items: center;
  height: 25px;
  margin-bottom: 8px;
}
.mini-icon .caret { margin-left: 1px; }

.menu {
  position: absolute;
  left: 421px;
  top: 277px;
  width: 171px;
  padding: 1px 1px 0 0;
  border: 1px solid #c6c6c6;
  background: #fff;
  color: #555;
  box-shadow: 1px 1px 3px #bbb;
}
.menu > button {
  width: 100%;
  height: 25px;
  display: flex;
  align-items: center;
  gap: 11px;
  padding: 0 8px 0 5px;
}
.menu > button svg:first-child { width: 16px; height: 16px; }
.menu > button:disabled { color: #aaa; }
.menu > .current { background: #c6c6c6; color: #333; }
.menu .sub { width: 5px; height: 8px; margin-left: auto; color: #555; }
.menu button:disabled .sub { color: #bbb; }
.menu .sub.split { box-sizing: content-box; padding: 3px 0 3px 9px; border-left: 1px solid #ddd; }
.menu hr {
  height: 1px;
  margin: 0 0 1px 32px;
  border: 0;
  background: #ddd;
}
.menu-title {
  height: 24px;
  display: flex;
  align-items: center;
  background: linear-gradient(90deg, #fff 25px, #ebebeb 25px);
  padding-left: 5px;
  gap: 12px;
}
.menu-title svg { width: 16px; height: 17px; }
.menu-title strong { font-weight: 700; color: #666; }
.paste-row { height: 30px; padding: 3px 0 0 31px; line-height: 0; }

/* task pane */
.pane {
  flex: none;
  width: 282px;
  margin: 2px 0;
  padding: 12px 10px 0 13px;
  border-left: 1px solid #c6c6c6;
}
.pane-head { display: flex; align-items: flex-start; gap: 8px; }
.pane-head h2 {
  flex: 1;
  font-size: 21px;
  line-height: 24px;
  font-weight: 400;
  color: #2b579a;
}
.pane-head button { height: 18px; display: flex; align-items: center; color: #777; }
.pane-tabs { display: flex; padding: 5px 0 0 5px; gap: 18px; color: #444; }
.pane-tabs .on { color: #2b579a; font-weight: 700; }
.pane-icons {
  display: flex;
  align-items: center;
  gap: 17px;
  height: 24px;
  margin: 14px 0 0 6px;
}
.pane-icons button { line-height: 0; }
.pane-rule { display: block; margin: 8px 0 1px; }
.section {
  display: flex;
  align-items: center;
  gap: 7px;
  height: 27px;
  margin-left: 9px;
  font-weight: 700;
}

/* status bar */
.status {
  flex: none;
  height: 19px;
  display: flex;
  align-items: center;
  gap: 22px;
  padding: 0 18px 0 7px;
  border-top: 1px solid #c6c6c6;
  background: #f1f1f1;
  color: #555;
}
.macro { margin-left: -5px; }
.views { display: flex; align-self: stretch; margin-left: auto; margin-right: -18px; }
.views button { width: 38px; display: grid; place-items: center; }
.views .on { background: #cacaca; }
.zoom-group {
  display: flex;
  align-items: center;
  gap: 4px;
  margin-right: -6px;
}
.zoom-group button { line-height: 0; }
.zoom {
  width: 100px;
  height: 14px;
  margin: 0;
  appearance: none;
  background: linear-gradient(#aaa, #aaa) center / 100% 1px no-repeat;
}
.zoom::-webkit-slider-thumb {
  appearance: none;
  width: 4px;
  height: 11px;
  background: #555;
}

/* overlays */
.annotations {
  position: absolute;
  left: 0;
  top: 0;
  z-index: 5;
  pointer-events: none;
}
.watermark {
  position: absolute;
  right: 11px;
  bottom: 6px;
  z-index: 6;
  display: flex;
  opacity: .8;
  pointer-events: none;
}
.watermark div { display: flex; flex-direction: column; margin-left: -2px; }
.watermark strong { font-size: 21px; line-height: 24px; color: #3f87d0; }
.watermark em {
  font: 700 16px/22px "Liberation Sans", Arial, sans-serif;
  color: #4fc073;
}
```
